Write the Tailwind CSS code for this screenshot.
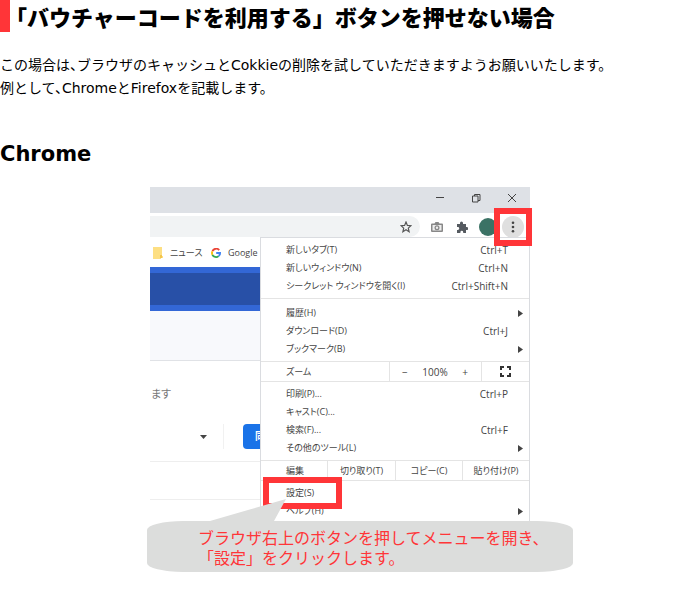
<!DOCTYPE html>
<html lang="ja">
    <head>
        <meta charset="UTF-8" />
        <meta name="viewport" content="width=device-width, initial-scale=1.0" />
        <title>ボタンを押せない場合</title>
        <script src="https://cdn.jsdelivr.net/npm/@tailwindcss/browser@4"></script>
    </head>
    <body
        class="bg-white text-black font-['DejaVu_Sans','Noto_Sans_CJK_JP',sans-serif]"
    >
        <h1
            class="h-8 border-l-10 border-[#ff3538] pl-[6px] pt-[2px] text-[22px] leading-7 font-black font-['Noto_Sans_CJK_JP',sans-serif] [text-spacing-trim:trim-start]"
        >
            「バウチャーコードを利用する」ボタンを押せない場合
        </h1>
        <p class="mt-[22px] text-sm leading-[23px] [font-feature-settings:'halt']">
            この場合は、ブラウザのキャッシュとCokkieの削除を試していただきますようお願いいたします。<br />
            例として、ChromeとFirefoxを記載します。
        </p>
        <h2 class="mt-10 text-[21px] leading-7 font-bold">Chrome</h2>

        <figure class="relative mx-auto mt-[19px] w-[380px]">
            <!-- browser window -->
            <div
                class="h-[334px] overflow-hidden text-[10px] text-[#444] font-['Open_Sans','Noto_Sans_CJK_JP',sans-serif] [font-feature-settings:'palt']"
            >
                <div class="flex h-[26px] items-center justify-end gap-[26px] bg-[#dee1e6] pr-[13px] pb-1">
                    <button aria-label="最小化">
                        <svg class="size-[10px]" viewBox="0 0 10 10" stroke="#444" fill="none"><path d="M1 4.5h8" /></svg>
                    </button>
                    <button aria-label="元に戻す">
                        <svg class="size-[10px]" viewBox="0 0 10 10" stroke="#444" fill="none"><path d="M1.500 3h5.500v6h-5.500zM3.500 3v-1.500h5.500v6h-2" /></svg>
                    </button>
                    <button aria-label="閉じる">
                        <svg class="size-[10px]" viewBox="0 0 10 10" stroke="#444" fill="none"><path d="M1 1l8 8M9 1l-8 8" /></svg>
                    </button>
                </div>

                <div class="flex h-6 items-end overflow-hidden pt-[3px]">
                    <div class="flex h-[21px] w-[270px] items-center justify-end rounded-r-full bg-[#f1f3f4] pr-2">
                        <svg class="size-3" viewBox="0 0 12 12" fill="none" stroke="#555" stroke-width="1.200"><path d="M6 1l1.400 3.400 3.600.3-2.700 2.400.8 3.600L6 8.800 2.900 10.700l.8-3.600L1 4.700l3.600-.3z" /></svg>
                    </div>
                    <div class="flex h-[21px] flex-1 items-center gap-[13px] pl-[11px]">
                        <svg class="size-3" viewBox="0 0 12 12"><path d="M1 2.500h2.500L4.500 1h3l1 1.500H11q1 0 1 1V10q0 1-1 1H1q-1 0-1-1V3.500q0-1 1-1z" fill="#888" /><rect x="1.500" y="4" width="9" height="5.500" fill="#eee" /><circle cx="6" cy="6.700" r="2.500" fill="#888" /><circle cx="6" cy="6.700" r="1.200" fill="#eee" /></svg>
                        <svg class="size-3" viewBox="0 0 12 12" fill="#555a60"><path d="M1 3h3V2a1.500 1.500 0 0 1 3 0v1h3v3h.7a1.400 1.400 0 0 1 0 3H10v3H7.200v-.8a1.400 1.400 0 0 0-2.800 0v.8H1V9h.8a1.400 1.400 0 0 0 0-2.900H1z" /></svg>
                    </div>
                    <div class="flex h-[21px] w-[51px] items-center gap-[5px]">
                        <span class="size-[18px] shrink-0 rounded-full bg-[#3b7265]"></span>
                        <button class="flex size-[22px] shrink-0 items-center justify-center rounded-full bg-[#dfdfdf]" aria-label="メニュー">
                            <svg class="h-3 w-1" viewBox="0 0 4 12" fill="#444"><circle cx="2" cy="1.800" r="1.300" /><circle cx="2" cy="6" r="1.300" /><circle cx="2" cy="10.200" r="1.300" /></svg>
                        </button>
                    </div>
                </div>

                <div class="flex h-[284px]">
                    <!-- page behind the menu -->
                    <div class="w-[110px] overflow-hidden">
                        <div class="flex h-[30px] items-center pl-[3px] pt-px whitespace-nowrap">
                            <svg class="h-3 w-[10px]" viewBox="0 0 10 12"><path d="M0 0h9v9h1v2H8v1H0z" fill="#fddf83" /><path d="M7 8h2v3H7z" fill="#f3c54f" /></svg>
                            <a href="#" class="ml-[7px] w-[41px] text-[9px]">ニュース</a>
                            <svg class="size-[10px] shrink-0" viewBox="0 0 10 10" fill="none" stroke-width="1.800"><path d="M8.200 2.100A4 4 0 0 0 1.400 3.300" stroke="#ea4335" /><path d="M1.400 3.300a4 4 0 0 0 0 3.500" stroke="#fbbc05" /><path d="M1.400 6.800a4 4 0 0 0 6.200 1.300" stroke="#34a853" /><path d="M5.200 5h3.900q0 2-1.500 3.100" stroke="#4285f4" /></svg>
                            <a href="#" class="ml-[7px] text-[9px]">Google</a>
                        </div>
                        <div class="h-11 border-y-6 border-[#3367d6] bg-[#2850a7]"></div>
                        <div class="h-[50px] border-b border-[#e0e2e6] bg-[#f8f9fc]"></div>
                        <p class="pl-px pt-[23px] text-[11px] leading-5 text-[#777]">ます</p>
                        <div class="mt-5 flex h-[25px] items-center justify-end">
                            <svg class="h-1 w-[7px]" viewBox="0 0 7 4"><path d="M0 0h7L3.500 4z" fill="#444" /></svg>
                            <span class="ml-4 h-full w-px bg-[#f1f1f1]"></span>
                            <button class="ml-[19px] h-full w-[17px] overflow-hidden rounded-l bg-[#1a73e8] pl-3 text-left font-bold text-white">同</button>
                        </div>
                        <div class="mt-3 h-[39px] border-y border-[#eee]"></div>
                    </div>

                    <!-- chrome menu -->
                    <div class="flex-1 border-t border-x border-[#dadce0] bg-white text-[9px] leading-[18px]">
                        <div class="pt-[3px] pb-[3px]">
                            <button class="flex w-full pl-[25px]"><span class="flex-1 text-left">新しいタブ(T)</span><span class="text-[10px]">Ctrl+T</span><span class="w-[21px]"></span></button>
                            <button class="flex w-full pl-[25px]"><span class="flex-1 text-left">新しいウィンドウ(N)</span><span class="text-[10px]">Ctrl+N</span><span class="w-[21px]"></span></button>
                            <button class="flex w-full pl-[25px]"><span class="flex-1 text-left">シークレット ウィンドウを開く(I)</span><span class="text-[10px]">Ctrl+Shift+N</span><span class="w-[21px]"></span></button>
                        </div>
                        <div class="border-t border-[#e4e4e4] pt-[5px] pb-[3px]">
                            <button class="flex w-full items-center pl-[25px] pr-[6px]"><span class="flex-1 text-left">履歴(H)</span><svg class="h-[7px] w-[5px]" viewBox="0 0 5 7"><path d="M0 0l5 3.500L0 7z" fill="#444" /></svg></button>
                            <button class="flex w-full pl-[25px]"><span class="flex-1 text-left">ダウンロード(D)</span><span class="text-[10px]">Ctrl+J</span><span class="w-[21px]"></span></button>
                            <button class="flex w-full items-center pl-[25px] pr-[6px]"><span class="flex-1 text-left">ブックマーク(B)</span><svg class="h-[7px] w-[5px]" viewBox="0 0 5 7"><path d="M0 0l5 3.500L0 7z" fill="#444" /></svg></button>
                        </div>
                        <div class="flex h-[21px] items-center border-y border-[#e4e4e4] pl-[25px]">
                            <span class="flex-1">ズーム</span>
                            <div class="flex h-full w-[93px] items-center justify-between border-x border-[#e4e4e4] px-3 text-[10px]">
                                <button>−</button><span>100%</span><button class="mr-px">+</button>
                            </div>
                            <button class="flex w-[47px] justify-center" aria-label="全画面表示">
                                <svg class="size-[11px]" viewBox="0 0 11 11" fill="none" stroke="#333" stroke-width="2"><path d="M1 4V1h3M7 1h3v3M10 7v3H7M4 10H1V7" /></svg>
                            </button>
                        </div>
                        <div class="py-[3px]">
                            <button class="flex w-full pl-[25px]"><span class="flex-1 text-left">印刷(P)...</span><span class="text-[10px]">Ctrl+P</span><span class="w-[21px]"></span></button>
                            <button class="flex w-full pl-[25px]"><span>キャスト(C)...</span></button>
                            <button class="flex w-full pl-[25px]"><span class="flex-1 text-left">検索(F)...</span><span class="text-[10px]">Ctrl+F</span><span class="w-[21px]"></span></button>
                            <button class="flex w-full items-center pl-[25px] pr-[6px]"><span class="flex-1 text-left">その他のツール(L)</span><svg class="h-[7px] w-[5px]" viewBox="0 0 5 7"><path d="M0 0l5 3.500L0 7z" fill="#444" /></svg></button>
                        </div>
                        <div class="flex h-[21px] items-center border-y border-[#e4e4e4] pl-[25px]">
                            <span class="flex-1">編集</span>
                            <button class="h-full w-[68px] border-l border-[#e4e4e4]">切り取り(T)</button>
                            <button class="h-full w-[67px] border-l border-[#e4e4e4]">コピー(C)</button>
                            <button class="h-full w-[67px] border-l border-[#e4e4e4]">貼り付け(P)</button>
                        </div>
                        <div class="pt-[3px]">
                            <button class="flex w-full pl-[25px]">設定(S)</button>
                            <button class="flex w-full items-center pl-[25px] pr-[6px]"><span class="flex-1 text-left">ヘルプ(H)</span><svg class="h-[7px] w-[5px]" viewBox="0 0 5 7"><path d="M0 0l5 3.500L0 7z" fill="#444" /></svg></button>
                        </div>
                    </div>
                </div>
            </div>

            <!-- red frames and the balloon tail -->
            <span class="absolute left-[344px] top-[21px] size-[38px] border-6 border-[#ff3538]"></span>
            <span class="absolute left-[113px] top-[290px] h-8 w-[79px] border-6 border-[#ff3538]"></span>
            <svg class="absolute left-[60px] top-[312px] h-6 w-[77px]" viewBox="0 0 77 24" fill="#dcdddc"><path d="M0 24V22L76 0 64 22v2z" /></svg>

            <figcaption
                class="-ml-[3px] h-[51px] w-[426px] rounded-[36px/9px] bg-[#dcdddc] pl-[51px] pt-[6px] text-base leading-5 text-[#ff3538] font-['Noto_Sans_CJK_JP',sans-serif] whitespace-nowrap"
            >
                ブラウザ右上のボタンを押してメニューを開き、<br />
                「設定」をクリックします。
            </figcaption>
        </figure>
    </body>
</html>
